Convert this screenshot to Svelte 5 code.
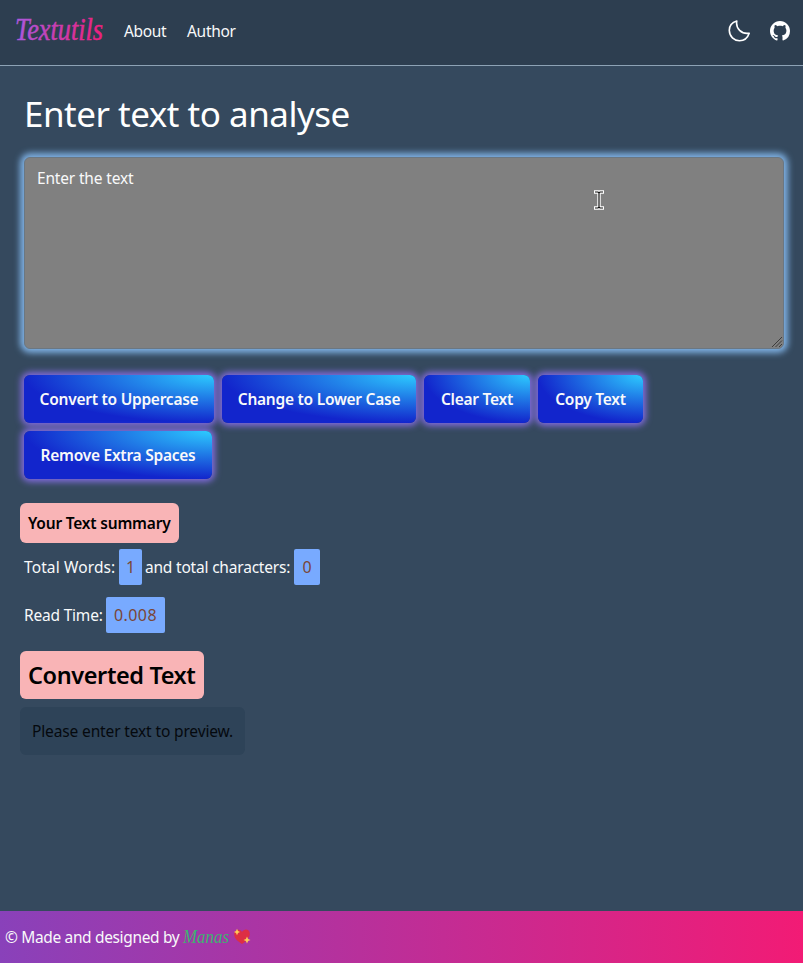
<script>
  let text = $state('');
  let words = $derived(text.split(' ').length);
  const actions = [
    { label: 'Convert to Uppercase', width: 190, run: () => (text = text.toUpperCase()) },
    { label: 'Change to Lower Case', width: 194, run: () => (text = text.toLowerCase()) },
    { label: 'Clear Text', width: 106, run: () => (text = '') },
    { label: 'Copy Text', width: 105, run: () => navigator.clipboard?.writeText(text) },
    { label: 'Remove Extra Spaces', width: 188, run: () => (text = text.split(/\s+/).join(' ')) }
  ];
</script>

<div class="page">
  <nav>
    <svg class="brand" width="92" height="48" viewBox="0 0 92 48" aria-label="Textutils">
      <defs>
        <linearGradient id="brandfill" gradientUnits="userSpaceOnUse" x1="0" y1="0" x2="90" y2="0">
          <stop offset="0" stop-color="#aa59df" />
          <stop offset="1" stop-color="#f01d78" />
        </linearGradient>
      </defs>
      <text x="0" y="33" textLength="88" lengthAdjust="spacingAndGlyphs" fill="url(#brandfill)" stroke="url(#brandfill)" stroke-width=".5">Textutils</text>
    </svg>
    <span class="link about">About</span>
    <span class="link author">Author</span>
    <div class="icons">
      <svg width="22" height="22" viewBox="0 0 22 22" fill="none" stroke="#fff" stroke-width="1.6" stroke-linejoin="round">
        <path d="M8.800 1C3.500 2.600 1.200 6.500 1.300 10.600C1.500 16.500 6 20.700 11.500 20.700C16 20.700 19.600 18 21.200 13.200C13.500 14.500 7.500 8.500 8.800 1Z" />
      </svg>
      <svg width="20" height="20" viewBox="0 0 16 16" fill="#fff">
        <path d="M8 0C3.58 0 0 3.58 0 8c0 3.54 2.29 6.53 5.47 7.59.4.07.55-.17.55-.38 0-.19-.01-.82-.01-1.49-2.01.37-2.53-.49-2.69-.94-.09-.23-.48-.94-.82-1.13-.28-.15-.68-.52-.01-.53.63-.01 1.08.58 1.23.82.72 1.21 1.87.87 2.33.66.07-.52.28-.87.51-1.07-1.78-.2-3.64-.89-3.64-3.95 0-.87.31-1.59.82-2.15-.08-.2-.36-1.02.08-2.12 0 0 .67-.21 2.2.82.64-.18 1.32-.27 2-.27s1.36.09 2 .27c1.53-1.04 2.2-.82 2.2-.82.44 1.1.16 1.92.08 2.12.51.56.82 1.27.82 2.15 0 3.07-1.87 3.75-3.65 3.95.29.25.54.73.54 1.48 0 1.07-.01 1.93-.01 2.2 0 .21.15.46.55.38A8.01 8.01 0 0 0 16 8c0-4.42-3.58-8-8-8z" />
      </svg>
    </div>
  </nav>

  <main>
    <h1>Enter text to analyse</h1>
    <div class="editor">
      <textarea bind:value={text} placeholder="Enter the text"></textarea>
      <svg class="pointer" width="10" height="21" viewBox="0 0 10 21" fill="none">
        <path d="M0 2H4L5 3L6 2H10M0 18H4L5 17L6 18H10M5 3V17" stroke="#fff" stroke-width="3.400" />
        <path d="M1 2H4L5 3L6 2H9M1 18H4L5 17L6 18H9M5 3V17" stroke="#111" stroke-width="1.200" />
      </svg>
      <svg class="grip" width="12" height="12" viewBox="0 0 12 12" stroke="#3c3c3c" stroke-width="1">
        <path d="M1 11 11 1M4.500 11 11 4.500M8 11l3-3" />
      </svg>
    </div>
    <div class="actions">
      {#each actions as action}
        <button style:width="{action.width}px" onclick={action.run}>{action.label}</button>
      {/each}
    </div>

    <h2 class="tag summary">Your Text summary</h2>
    <div class="stat">
      <span class="words">Total Words:</span><b style="width: 23px">{words}</b><span class="chars">and total characters:</span><b style="width: 26px">{text.length}</b>
    </div>
    <div class="stat second">
      <span class="read">Read Time:</span><b class="time">{(0.008 * words).toFixed(3)}</b>
    </div>
    <h2 class="tag converted">Converted Text</h2>
    <div class="preview">{text || 'Please enter text to preview.'}</div>
  </main>

  <footer>
    <span class="made">© Made and designed by</span>
    <svg class="name" width="50" height="32" viewBox="0 0 50 32">
      <text x="1" y="22" textLength="46" lengthAdjust="spacingAndGlyphs">Manas</text>
    </svg>
    <svg width="18" height="18" viewBox="0 0 18 18">
      <path d="M9 16C6 14 1.200 11 1.200 6.500C1.200 1.500 7 .2 9 4C11-.2 17 .8 16.800 6C16.600 10.500 12 14 9 16Z" fill="#dd2e44" />
      <path d="M4 .8 5 3l2 1-2 1-1 2.200L3 5 1 4l2-1ZM14 8.500l1.100 2.400 2.400 1.100-2.400 1.100L14 15.500l-1.100-2.400L10.500 12l2.400-1.100Z" fill="#fdcb58" />
    </svg>
  </footer>
</div>

<style>
  :global(body) { margin: 0; background: #35495e; }
  .page {
    height: 963px;
    display: flex;
    flex-direction: column;
    background: #35495e;
    color: #f8f9fa;
    font: 15.5px/24px "Noto Sans", sans-serif;
    overflow: hidden;
  }
  .page * { box-sizing: border-box; white-space: nowrap; }
  nav {
    height: 66px;
    flex: none;
    display: flex;
    align-items: center;
    padding: 0 13px 4px 15px;
    background: #2d3e50;
    border-bottom: 1px solid #8da2b5;
  }
  svg { flex: none; display: block; }
  .brand { overflow: visible; }
  .brand text { font: italic 32px "Liberation Serif", serif; }
  .link { width: 43px; margin-left: 17px; letter-spacing: -.35px; }
  .author { width: 50px; margin-left: 20px; letter-spacing: -.3px; }
  .icons { display: flex; align-items: center; gap: 20px; margin-left: auto; }
  main { flex: 1; padding: 24px 19px 0 24px; }
  h1 {
    margin: 0 0 19px;
    font-size: 35px;
    line-height: 48px;
    font-weight: 400;
    letter-spacing: -.49px;
    color: #fff;
  }
  .editor { position: relative; width: 760px; height: 192px; }
  textarea {
    display: block;
    width: 760px;
    height: 192px;
    padding: 8px 12px;
    border: 1px solid #6b7782;
    border-radius: 6px;
    outline: none;
    resize: none;
    background: #808080;
    color: #fff;
    font: 15.5px/24px "Noto Sans", sans-serif;
    letter-spacing: -.17px;
    box-shadow: 0 0 6px 4px #7eb0e2;
  }
  textarea::placeholder { color: #f8f9fa; opacity: 1; }
  .pointer { position: absolute; left: 570px; top: 33px; }
  .grip { position: absolute; right: 1px; bottom: 1px; }
  .actions { display: flex; flex-wrap: wrap; gap: 8px; margin-top: 26px; }
  button {
    height: 48px;
    padding: 0;
    border: 0;
    border-radius: 6px;
    color: #f8f9fa;
    font: 600 15.5px/24px "Noto Sans", sans-serif;
    letter-spacing: -.25px;
    background: radial-gradient(100% 100% at 100% 0, #2dcbff 0, #1225cc 100%);
    box-shadow: 0 0 6px 3px #806bdc;
  }
  .tag {
    width: 159px;
    height: 40px;
    margin: 24px 0 0 -4px;
    padding: 8px;
    border-radius: 6px;
    background: #f9b4b6;
    color: #000;
    font-size: 15.5px;
    line-height: 24px;
    font-weight: 600;
    letter-spacing: -.2px;
  }
  .stat { display: flex; align-items: center; height: 36px; margin-top: 6px; }
  .second { margin-top: 12px; }
  .stat span { letter-spacing: -.2px; }
  .stat .words { width: 95px; letter-spacing: .12px; }
  .stat .chars { width: 152px; padding-left: 3px; }
  .stat .read { width: 82px; }
  b {
    height: 36px;
    line-height: 36px;
    border-radius: 2px;
    background: #78aaff;
    color: #7a4637;
    font-size: 16px;
    font-weight: 400;
    text-align: center;
  }
  .time { width: 59px; letter-spacing: .4px; }
  .converted {
    width: 184px;
    height: 48px;
    margin-top: 18px;
    font-size: 23.5px;
    line-height: 32px;
    letter-spacing: -.4px;
  }
  .preview {
    width: 225px;
    height: 48px;
    margin: 8px 0 0 -4px;
    padding: 12px;
    border-radius: 6px;
    background: #2e4358;
    color: #05090e;
    letter-spacing: -.14px;
  }
  footer {
    flex: none;
    height: 52px;
    display: flex;
    align-items: center;
    padding-left: 5px;
    background: linear-gradient(90deg, #8941ba, #f21b75);
  }
  .made { width: 177px; letter-spacing: -.35px; }
  .name { margin-right: 1px; overflow: visible; }
  .name text { font: italic 18px "Liberation Serif", serif; fill: #3cb371; }
</style>
